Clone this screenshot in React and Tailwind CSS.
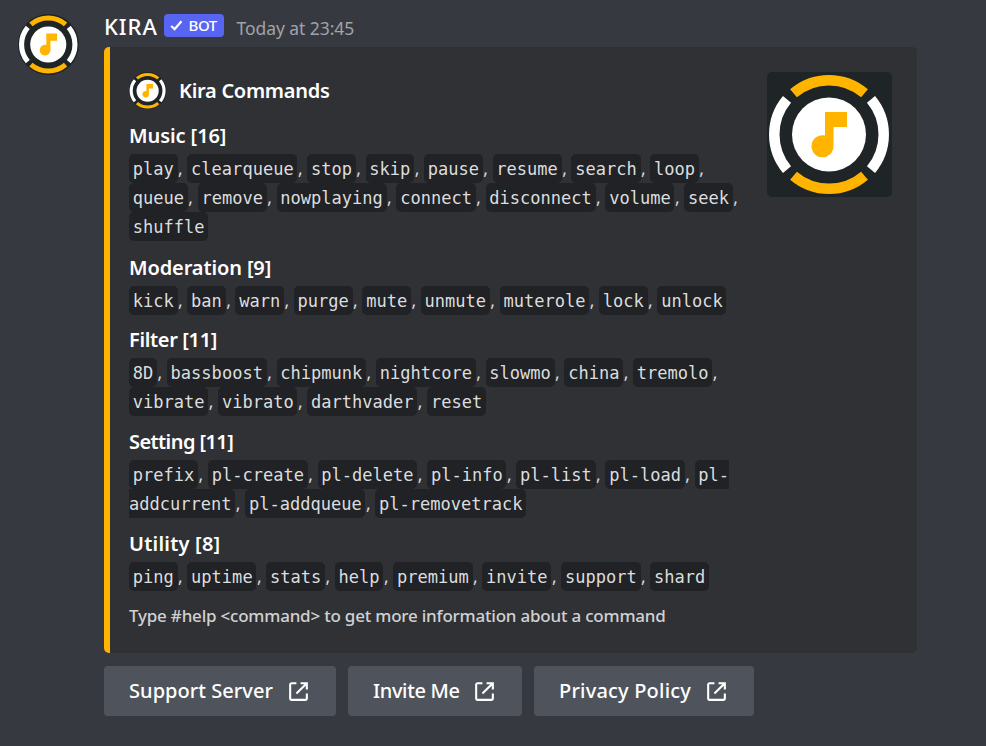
const SECTIONS = [
  {
    title: 'Music [16]',
    tracking: 'tracking-[-0.08px]',
    spacing: 'mb-[12px]',
    rows: [
      'play clearqueue stop skip pause resume search loop',
      'queue remove nowplaying connect disconnect volume seek',
      'shuffle',
    ],
  },
  {
    title: 'Moderation [9]',
    tracking: 'tracking-[-0.12px]',
    spacing: 'mb-[10px]',
    rows: ['kick ban warn purge mute unmute muterole lock unlock'],
  },
  {
    title: 'Filter [11]',
    tracking: 'tracking-[-0.35px]',
    spacing: 'mb-[11px]',
    rows: [
      '8D bassboost chipmunk nightcore slowmo china tremolo',
      'vibrate vibrato darthvader reset',
    ],
  },
  {
    title: 'Setting [11]',
    tracking: 'tracking-[-0.58px]',
    spacing: 'mb-[11px]',
    rows: [
      'prefix pl-create pl-delete pl-info pl-list pl-load pl-',
      'addcurrent pl-addqueue pl-removetrack',
    ],
  },
  {
    title: 'Utility [8]',
    tracking: 'tracking-[0.22px]',
    spacing: 'mb-[10px]',
    rows: ['ping uptime stats help premium invite support shard'],
  },
];

const LINKS = [
  { label: 'Support Server', width: 'w-[232px]', tracking: 'tracking-[0.05px]' },
  { label: 'Invite Me', width: 'w-[174px]', tracking: 'tracking-[-0.35px]' },
  { label: 'Privacy Policy', width: 'w-[220px]', tracking: 'tracking-[0.2px]' },
];

function Logo({ className, round }) {
  return (
    <svg viewBox="0 0 125 125" className={className}>
      {round ? <circle cx="62.5" cy="62.5" r="62.5" fill="#1f2427" /> : <rect width="125" height="125" fill="#1f2427" />}
      <g fill="none" strokeWidth="10.5">
        <path d="M26.5 21.3A54.8 54.8 0 0 1 97.5 21.3" stroke="#ffb400" />
        <path d="M26.5 103.7A54.8 54.8 0 0 0 97.5 103.7" stroke="#ffb400" />
        <path d="M20 27.4A54.8 54.8 0 0 0 20 97.6" stroke="#fff" />
        <path d="M104 27.4A54.8 54.8 0 0 1 104 97.6" stroke="#fff" />
      </g>
      <circle cx="62" cy="62.5" r="37" fill="#fff" />
      <path d="M58 40H80V55H66.500V74A11 11 0 1 1 58 63.5Z" fill="#ffb400" />
    </svg>
  );
}

function Command({ name, comma }) {
  let shape = 'rounded-[5px] px-[3.75px]';
  if (name === 'pl-') shape = 'rounded-l-[5px] pl-[3.75px]';
  if (name === 'addcurrent') shape = 'rounded-r-[5px] pr-[3.75px]';
  return (
    <>
      <code className={`${shape} block h-[29px] bg-[#202225] font-['DejaVu_Sans_Mono',monospace] text-[17.05px] leading-[31px]`}>
        {name}
      </code>
      {comma && <span className="w-[9.85px] pl-[0.5px] text-[17.5px] leading-[29px]">,</span>}
    </>
  );
}

function ExternalIcon() {
  return (
    <svg viewBox="0 0 24 24" className="size-[25px]" fill="#fff">
      <path d="M10 5V3H5.375C4.065 3 3 4.065 3 5.375V18.625C3 19.936 4.065 21 5.375 21H18.625C19.936 21 21 19.936 21 18.625V14H19V19H5V5H10Z" />
      <path d="M21 3H14V5H17.586L9.293 13.292L10.707 14.706L19 6.413V10H21V3Z" />
    </svg>
  );
}

export default function App() {
  return (
    <div className="flex h-[746px] w-[986px] overflow-hidden bg-[#373941] pl-[17.5px] font-['Noto_Sans',sans-serif] text-white">
      <Logo round className="mt-[14px] size-[61px] shrink-0" />
      <main className="ml-[25.5px] flex flex-col items-start">
        <header className="flex h-[47px] items-start">
          <h1 className="mt-[11px] w-[60px] text-[22px] font-medium leading-[30px] tracking-[0.95px]">KIRA</h1>
          <span className="mt-[14px] flex h-[23px] w-[60px] items-center rounded-[4px] bg-[#5865f2] pl-[6px]">
            <svg viewBox="0 0 13 11" className="h-[11px] w-[13px]" fill="none" stroke="#fff" strokeWidth="2.3">
              <path d="M1.2 6L4.6 9.2L11.5 1.2" />
            </svg>
            <span className="ml-[5.5px] text-[15px] font-medium leading-[23px] tracking-[-0.4px]">BOT</span>
          </span>
          <time className="ml-[12.5px] mt-[16px] text-[17.5px] leading-[24px] tracking-[-0.06px] text-[#a0a3a8]">Today at 23:45</time>
        </header>

        <article className="flex h-[606px] w-[813px] justify-between rounded-[5px] border-l-[6px] border-[#ffb400] bg-[#303135] pl-[19px] pr-[25px] pt-[25px]">
          <div>
            <div className="flex h-[37px] items-center">
              <Logo round className="size-[37.5px]" />
              <h2 className="ml-[12.5px] text-[20px] font-semibold leading-[37px] tracking-[-0.28px]">Kira Commands</h2>
            </div>
            <div className="mt-[12px] text-[#dcddde]">
              {SECTIONS.map(({ title, tracking, spacing, rows }) => (
                <section key={title} className={spacing}>
                  <h3 className={`${tracking} mb-[5px] h-[28px] text-[20px] font-semibold leading-[30px] text-white`}>{title}</h3>
                  {rows.map((row, r) => {
                    const names = row.split(' ');
                    return (
                      <div key={row} className="flex h-[29px] whitespace-nowrap">
                        {names.map((name, i) => (
                          <Command
                            key={name}
                            name={name}
                            comma={name !== 'pl-' && (i < names.length - 1 || r < rows.length - 1)}
                          />
                        ))}
                      </div>
                    );
                  })}
                </section>
              ))}
            </div>
            <p className="mt-[13px] text-[17px] font-medium leading-[24px] tracking-[-0.21px] text-[#d0d1d3]">
              Type #help &lt;command&gt; to get more information about a command
            </p>
          </div>
          <Logo className="size-[125px] rounded-[5px]" />
        </article>

        <nav className="mt-[13px] flex gap-[12px]">
          {LINKS.map(({ label, width, tracking }) => (
            <a key={label} className={`${width} flex h-[50px] items-center justify-between rounded-[4px] bg-[#4f545c] pl-[25px] pr-[25px]`}>
              <span className={`${tracking} whitespace-nowrap text-[20px] font-medium`}>{label}</span>
              <ExternalIcon />
            </a>
          ))}
        </nav>
      </main>
    </div>
  );
}
